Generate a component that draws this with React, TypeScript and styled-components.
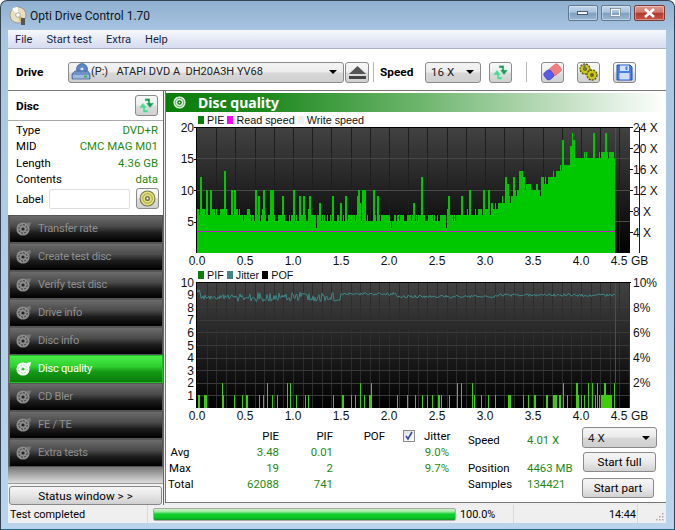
import React from "react";
import styled, { createGlobalStyle } from "styled-components";

const UI = `Roboto, "Noto Sans", sans-serif`;
const CHART = `"Liberation Sans", Arial, sans-serif`;

const Global = createGlobalStyle`
  html, body { margin: 0; padding: 0; background: #fff; }
  #root { width: 675px; height: 530px; overflow: hidden; }
  * { box-sizing: border-box; }
`;

const Win = styled.div`
  width: 675px; height: 530px; display: flex; flex-direction: column;
  padding: 0 8px 6px 7px;
  border: 1px solid #33434f; border-bottom-color: #1c6b84; border-radius: 7px 7px 0 0;
  background: linear-gradient(180deg, #8fb0d0 0%, #a9c6e2 6%, #b9d4ec 100%);
  font: 11.4px/14px ${UI}; color: #000;
`;
const TitleBar = styled.div`display: flex; align-items: center; height: 29px; flex: none;`;
const AppIconBox = styled.div`width: 21px; display: flex; margin-left: 1px;`;
const TitleText = styled.div`font-size: 12px; color: #0c1520; flex: 1;`;
const WinBtns = styled.div`display: flex; gap: 3px; margin-top: -6px; margin-right: 1px;`;
const WinBtn = styled.div<{ $close?: boolean }>`
  width: ${p => (p.$close ? 31 : 30)}px; height: 16px; border-radius: 2px; display: flex; align-items: center; justify-content: center;
  border: 1px solid ${p => (p.$close ? "#7d3a34" : "#5d7892")};
  background: ${p => p.$close
    ? "linear-gradient(180deg,#dc9a90 0%,#cf7a6c 45%,#b3372a 50%,#c4574a 100%)"
    : "linear-gradient(180deg,#c3d6ea 0%,#a9c2dc 45%,#7f9fc0 50%,#9ab6d2 100%)"};
  box-shadow: inset 0 0 0 1px rgba(255,255,255,.35);
`;
const Menu = styled.div`
  height: 19px; flex: none; display: flex; gap: 14px; padding: 3px 0 0 7px; font-size: 11.1px; color: #1a2340;
  background: linear-gradient(180deg,#f6f8fd,#d6dcef); border-bottom: 1px solid #a9b2c6;
`;
const Tool = styled.div`height: 42px; flex: none; display: flex; align-items: center; background: #fff; padding: 5px 0 0 8px; border-bottom: 1px solid #777;`;
const BoldLabel = styled.div<{ $w: number; $ml?: number }>`width: ${p => p.$w}px; margin-left: ${p => p.$ml ?? 0}px; font-weight: 700; font-size: 11.8px; flex: none;`;
const Combo = styled.div<{ $w: number }>`
  width: ${p => p.$w}px; height: 21px; flex: none; display: flex; align-items: center; padding: 0 4px 0 2px;
  border: 1px solid #8a8a8a; border-radius: 3px; background: linear-gradient(180deg,#f4f4f4 0%,#ececec 48%,#d8d8d8 52%,#cfcfcf 100%);
  color: #222; font-size: 11.6px; white-space: pre;
`;
const ComboText = styled.span`flex: 1; padding-left: 3px;`;
const DriveText = styled.span`flex: 1; font-size: 11px;`;
const Arrow = styled.span`width: 0; height: 0; border: 4px solid transparent; border-top: 4px solid #000; border-bottom: 0; margin-right: 2px;`;
const IconBtn = styled.div<{ $ml?: number; $size?: number }>`
  width: ${p => p.$size ?? 23}px; height: 21px; margin-left: ${p => p.$ml ?? 0}px; flex: none; display: flex; align-items: center; justify-content: center;
  border: 1px solid #8a8a8a; border-radius: 3px; background: linear-gradient(180deg,#f8f8f8 0%,#eee 48%,#dcdcdc 52%,#d0d0d0 100%);
`;
const Sep = styled.div<{ $ml: number }>`width: 1px; height: 20px; margin-left: ${p => p.$ml}px; background: #b5b5b5; flex: none;`;

const Body = styled.div`flex: 1; display: flex; min-height: 0; background: #ececec;`;
const Side = styled.div`width: 156px; flex: none; display: flex; flex-direction: column; border-right: 1px solid #666;`;
const DiscPanel = styled.div`height: 124px; flex: none; background: #fff;`;
const DiscHead = styled.div`height: 30px; display: flex; align-items: center; justify-content: space-between; padding: 0 5px 0 8px; font-weight: 700; font-size: 11.8px; border-bottom: 1px solid #aaa;`;
const DiscRows = styled.div`display: grid; grid-template-columns: 1fr auto; row-gap: 2.4px; padding: 2px 5px 0 8px; line-height: 14px;`;
const Val = styled.div`color: #1f8a12; text-align: right;`;
const InfoVal = styled(Val)`text-align: left;`;
const LabelRow = styled.div`display: flex; align-items: center; padding: 2px 4px 0 8px;`;
const LabelText = styled.span`width: 33px; flex: none;`;
const LabelInput = styled.div`width: 81px; height: 20px; border: 1px solid #ddd; border-radius: 2px; background: #fff;`;
const Nav = styled.div`flex: 1; background: linear-gradient(180deg,#666 0,#666 93%,#ddd 100%); display: flex; flex-direction: column; padding-left: 1px;`;
const NavItem = styled.div<{ $on?: boolean }>`
  height: 28px; flex: none; display: flex; align-items: center; gap: 6px; padding: 0 0 0 5px; font-size: 11.1px; letter-spacing: -.25px;
  border: 1px solid ${p => (p.$on ? "#22bb22" : "#555")};
  color: ${p => (p.$on ? "#fff" : "#8f8f8f")};
  background: ${p => p.$on
    ? "linear-gradient(180deg,#48ec48 0%,#2fd02f 40%,#159a15 60%,#0a7d0a 100%)"
    : "linear-gradient(180deg,#6c6c6c 0%,#4a4a4a 40%,#1c1c1c 65%,#000 100%)"};
`;
const NavFill = styled.div`flex: 1;`;
const StatusBtnRow = styled.div`height: 23px; flex: none; background: #f2f2f2; padding: 2px 1px 1px 1px; border-top: 1px solid #999;`;
const StatusBtn = styled.div`
  height: 19px; display: flex; align-items: center; justify-content: center; border: 1px solid #888; border-radius: 3px; letter-spacing: .05px;
  background: linear-gradient(180deg,#f6f6f6,#e6e6e6 50%,#cfcfcf); font-size: 11.6px;
`;

const Main = styled.div`flex: 1; margin-left: 1px; background: #fff; border: 1px solid #777; border-width: 0 0 1px 1px; display: flex; flex-direction: column; min-width: 0; margin-bottom: 3px;`;
const Head = styled.div`
  height: 19px; flex: none; margin-top: 2px; display: flex; align-items: center; padding-left: 6px; gap: 11px; color: #fff; font: 700 14px/19px "Noto Sans", sans-serif;
  background: linear-gradient(90deg,#0b7d0b 0%,#1f8a1f 20%,#6bb46b 50%,#c4e0c4 80%,#fff 100%);
`;
const ChartBox = styled.div<{ $mt: number }>`margin-top: ${p => p.$mt}px; flex: none;`;
const Legend = styled.div`height: 14px; display: flex; align-items: center; padding-left: 32px; font: 10.8px/14px ${CHART}; color: #111;`;
const Swatch = styled.span<{ $c: string }>`width: 6px; height: 8px; background: ${p => p.$c}; margin-right: 3px;`;
const LegendItem = styled.span`margin-right: 3px;`;
const Plot = styled.svg`display: block; overflow: visible;`;

const Stats = styled.div`flex: 1; display: flex; padding: 5px 0 0 2px; min-height: 0;`;
const Table = styled.div`
  width: 281px; display: grid; flex: none; grid-template-columns: 62px 49px 54px 52px 35px 29px; grid-auto-rows: 16px; align-items: center;
`;
const Cell = styled.div`text-align: right; white-space: nowrap;`;
const GreenCell = styled(Cell)`color: #1f8a12;`;
const Lab = styled.div`width: 24px; text-align: center;`;
const Check = styled.div`width: 12px; height: 12px; margin-left: 18px; border: 1px solid #8a8a8a; background: linear-gradient(135deg,#dfe2ea,#fff); display: flex; align-items: center; justify-content: center;`;
const JitterHead = styled.div`padding-left: 4px; white-space: nowrap;`;
const Info = styled.div`width: 114px; margin-left: 19px; flex: none; display: grid; grid-template-columns: 59px 1fr; grid-template-rows: 16px 12px 16px 16px; padding-top: 4px; align-items: center; align-content: start;`;
const Controls = styled.div`width: 75px; flex: none; display: flex; flex-direction: column; margin-top: -1px;`;
const Push = styled.div<{ $mt: number; $ml: number; $w: number }>`
  width: ${p => p.$w}px; height: 20px; margin: ${p => p.$mt}px 0 0 ${p => p.$ml}px; display: flex; align-items: center; justify-content: center; border: 1px solid #8a8a8a; border-radius: 3px;
  background: linear-gradient(180deg,#f6f6f6,#eaeaea 50%,#d2d2d2); font-size: 11.6px;
`;
const Stat = styled.div`height: 18px; flex: none; display: flex; align-items: center; background: #efefef; margin-top: -1px;`;
const StatCell = styled.div<{ $w: number; $r?: boolean }>`width: ${p => p.$w}px; flex: none; height: 100%; display: flex; align-items: center; padding: 1px 1px 0 2px; font-size: 10.9px; justify-content: ${p => (p.$r ? "flex-end" : "flex-start")}; border-right: 1px solid #d9d9d9;`;
const Progress = styled.div`width: 303px; height: 13px; margin: 0 2px 0 5px; flex: none; border: 1px solid #aaa; border-radius: 2px; background: linear-gradient(180deg,#c8f4c8 0%,#9fe89f 25%,#10d030 45%,#0ec82a 75%,#0a9a1e 100%);`;
const Grip = styled.div`flex: 1; height: 100%; display: flex; align-items: flex-end; justify-content: flex-end; padding: 0 2px 2px 0;`;

function rng(seed: number) {
  return () => {
    seed |= 0; seed = (seed + 0x6d2b79f5) | 0;
    let t = Math.imul(seed ^ (seed >>> 15), 1 | seed);
    t = (t + Math.imul(t ^ (t >>> 7), 61 | t)) ^ t;
    return ((t ^ (t >>> 14)) >>> 0) / 4294967296;
  };
}

const X0 = 31, PW = 433, PH = 126, END = 418;

function pieValues(): number[] {
  const r = rng(71);
  const knots: [number, number][] = [[0, 6.6], [45, 6], [60, 5.4], [240, 5.6], [260, 5.8], [288, 6.6], [312, 8.6], [336, 10.5], [360, 12.5], [384, 15], [418, 16]];
  const base = (x: number) => {
    for (let i = 1; i < knots.length; i++) if (x <= knots[i][0]) {
      const [a, b] = knots[i - 1], [c, d] = knots[i];
      return b + ((x - a) / (c - a)) * (d - b);
    }
    return 16;
  };
  const out: number[] = [];
  let x = 0;
  while (x < END) {
    const w = r() < 0.7 ? 1 : r() < 0.7 ? 2 : 3;
    const v = base(x) + (r() - 0.4) * 1.5;
    for (let i = 0; i < w && x < END; i++, x++) {
      const s = r();
      let u = v;
      if (s > 0.9) u += 1.5 + r() * 3;
      else if (s < 0.06) u -= 1;
      out.push(Math.min(19, Math.max(4, Math.round(u))));
    }
  }
  const over: Record<number, number> = { 3: 12, 9: 10, 27: 13, 34: 10, 58: 10, 75: 10, 85: 9, 96: 10, 143: 8, 180: 9, 149: 4, 186: 3, 175: 3, 224: 12, 176: 10, 396: 19, 408: 19, 375: 19 };
  Object.keys(over).forEach(k => { out[+k] = over[+k]; });
  // each spike keeps a width of two columns, so that it reads as green beside the dark grid
  const widened = out.slice();
  out.forEach((v, i) => { if (i + 1 < out.length && v > out[i + 1] + 1) widened[i + 1] = v; });
  return widened;
}

const PIF: [number, number, number][] = [
  [1, 2, 1], [7, 3, 1], [25, 2, 1], [25, 1, 2], [37, 1, 1], [45, 1, 1], [49, 2, 1], [62, 1, 1], [66, 1, 1], [70, 1, 2], [75, 1, 1], [80, 1, 1],
  [90, 1, 2], [93, 1, 2], [99, 1, 1], [108, 1, 1], [111, 1, 1], [136, 1, 1], [145, 2, 1], [154, 1, 1], [158, 1, 1], [163, 1, 2], [167, 1, 1], [172, 2, 1], [174, 1, 2], [200, 1, 1], [210, 1, 1], [218, 1, 1],
  [225, 1, 1], [230, 1, 1], [235, 1, 1], [241, 2, 1], [244, 1, 1], [252, 1, 1], [260, 1, 2], [264, 1, 2], [275, 1, 2], [277, 1, 1], [284, 1, 1], [291, 1, 1], [298, 1, 1],
  [311, 3, 1], [326, 1, 1], [331, 1, 1], [337, 2, 1], [349, 2, 1], [356, 4, 1], [362, 2, 1], [366, 1, 2], [370, 1, 1], [379, 2, 2], [381, 1, 1], [384, 1, 1], [387, 1, 1], [391, 1, 2], [395, 1, 2], [398, 1, 1], [400, 1, 2], [402, 1, 1],
  [404, 11, 1], [407, 2, 2], [417, 1, 2],
];

function jitterPath(): string {
  const r = rng(9);
  let d = "";
  for (let x = 0; x <= END; x += 1) {
    const amp = x < 4 ? 2 : x < 40 ? 2.6 : x < 144 ? 4.6 : x < 230 ? 1.4 : x < 380 ? 1.4 : 1.5;
    const mid = x < 4 ? 9 : x < 144 ? 15 : x < 200 ? 12 : x < 300 ? 14.5 : 13;
    const y = mid + (r() - 0.5) * 2 * amp;
    d += `${d ? "L" : "M"}${X0 + x} ${y.toFixed(1)}`;
  }
  return d;
}

const XLabels = () => (
  <>
    {Array.from({ length: 10 }, (_, i) => (
      <text key={i} x={X0 + i * 48 - (i === 9 ? 10 : 0)} y={PH + 11.5} textAnchor="middle">{(i * 0.5).toFixed(1)}</text>
    ))}
    <text x={X0 + PW + 1} y={PH + 11.5}>GB</text>
  </>
);

const Frame = ({ step, hl, id, line }: { step: number; hl: number[]; id: string; line: string }) => (
  <>
    <defs>
      <linearGradient id={id} x1="0" x2="0" y1="0" y2="1">
        <stop offset="0" stopColor="#424242" />
        <stop offset="1" stopColor="#000" />
      </linearGradient>
    </defs>
    <rect x={X0} y={0} width={PW} height={PH} fill={`url(#${id})`} />
    {Array.from({ length: Math.round(432 / step) }, (_, i) => (
      <rect key={i} x={Math.round(X0 + (i + 1) * step)} y={0} width={1} height={PH} fill={step > 10 ? "#1e1e1e" : "#2c2c2c"} />
    ))}
    {hl.map(y => <rect key={y} x={X0} y={y} width={PW} height={1} fill={line} />)}
  </>
);

const pie = pieValues();

const ChartOne = () => (
  <Plot width={500} height={141} fontFamily={CHART} fontSize={12} fill="#111" aria-label="PIE chart">
    <Frame step={19.2} hl={[31, 63, 94]} id="g1" line="#484848" />
    {pie.map((v, i) => {
      const h = Math.round(v * 6.3);
      return <rect key={i} x={X0 + i} y={PH - h} width={1} height={h} fill="#00c800" />;
    })}
    <rect x={X0} y={104} width={END} height={1} fill="#c020c0" />
    <rect x={X0 + END} y={0} width={1} height={38} fill="#e01010" />
    <rect x={X0} y={0} width={PW + 1} height={1} fill="#000" />
    <rect x={X0 - 1} y={0} width={1} height={PH} fill="#000" />
    {[20, 15, 10, 5].map(v => (
      <g key={v}>
        <text x={X0 - 3} y={PH - v * 6.3 + 4.5} textAnchor="end">{v}</text>
        <rect x={X0 - 3} y={Math.round(PH - v * 6.3)} width={2} height={1} />
      </g>
    ))}
    {[24, 20, 16, 12, 8, 4].map(v => (
      <g key={v}>
        <rect x={X0 + PW} y={PH - v * 5.25} width={3} height={1} />
        <text x={X0 + PW + 3} y={PH - v * 5.25 + 4.5}>{v} X</text>
      </g>
    ))}
    <XLabels />
  </Plot>
);

const ChartTwo = () => (
  <Plot width={500} height={141} fontFamily={CHART} fontSize={12} fill="#111" aria-label="PIF chart">
    <Frame step={9.6} hl={[13, 25, 38, 50, 63, 76, 88, 101, 113]} id="g2" line="#3a3a3a" />
    {PIF.map(([x, w, h], i) => {
      const bar = Math.round(h * 12.6);
      return <rect key={i} x={X0 + x} y={PH - bar} width={w} height={bar} fill="#3fcc0a" />;
    })}
    <path d={jitterPath()} fill="none" stroke="#3f8585" strokeWidth={1} />
    <rect x={X0 + END} y={0} width={1} height={PH - 25} fill="#e01010" />
    <rect x={X0} y={0} width={PW + 1} height={1} fill="#000" />
    <rect x={X0 - 1} y={0} width={1} height={PH} fill="#000" />
    {[10, 9, 8, 7, 6, 5, 4, 3, 2, 1].map(v => (
      <text key={v} x={X0 - 3} y={PH - v * 12.6 + 4.5} textAnchor="end">{v}</text>
    ))}
    {[10, 8, 6, 4, 2].map(v => (
      <text key={v} x={X0 + PW + 3} y={PH - v * 12.6 + 4.5}>{v}%</text>
    ))}
    <XLabels />
  </Plot>
);

const Disc = ({ size = 16, fill = "#d9d9d9", ring = "#999", hole = "#fff" }: { size?: number; fill?: string; ring?: string; hole?: string }) => (
  <svg width={size} height={size} viewBox="0 0 16 16">
    <circle cx="8" cy="8" r="7" fill={fill} stroke={ring} strokeWidth="1" />
    <circle cx="8" cy="8" r="4.5" fill="none" stroke={ring} strokeWidth=".6" />
    <circle cx="8" cy="8" r="2.4" fill={ring} />
    <circle cx="8" cy="8" r="1" fill={hole} />
  </svg>
);

const NavIcon = ({ on }: { on?: boolean }) => (
  <svg width={17} height={16} viewBox="0 0 17 16" style={{ flex: "none" }}>
    <circle cx="8" cy="8" r="6.6" fill={on ? "#fff" : "#8c8c8c"} />
    <circle cx="8" cy="8" r="4.2" fill="none" stroke={on ? "#9be89b" : "#333"} strokeWidth="1" strokeDasharray="2 1.2" />
    <circle cx="8" cy="8" r="1.6" fill={on ? "#2fc82f" : "#222"} />
    <path d="M11 2 L16 1 L15 6 Z" fill={on ? "#fff" : "#777"} />
  </svg>
);

const Sync = () => (
  <svg width={19} height={17} viewBox="0 0 19 17">
    <path d="M8 1.5 H13 V6 H17 L13 11 L9 6 H11 V4 H8 Z" fill="#169a55" stroke="#bfe8cf" strokeWidth=".5" />
    <path d="M11 15.5 H6 V11 H2 L6 6 L10 11 H8 V13 H11 Z" fill="#45dc92" stroke="#bfe8cf" strokeWidth=".5" />
  </svg>
);

const Eject = () => (
  <svg width={19} height={15} viewBox="0 0 19 15">
    <path d="M9.5 1 L18 9 L1 9 Z" fill="#555" />
    <rect x="1" y="11" width="17" height="3" fill="#444" />
  </svg>
);

const Eraser = () => (
  <svg width={19} height={18} viewBox="0 0 19 18">
    <g transform="rotate(-38 9.5 9)">
      <rect x="7.5" y="4.5" width="11" height="9" rx="2.5" fill="#f08080" stroke="#d85a6a" strokeWidth=".6" />
      <rect x="0.5" y="4.5" width="8.5" height="9" rx="3" fill="#5a5ae8" stroke="#3a3ac0" strokeWidth=".6" />
    </g>
  </svg>
);

const Gear = ({ cx, cy, r }: { cx: number; cy: number; r: number }) => (
  <g>
    <circle cx={cx} cy={cy} r={r} fill="#d0c818" stroke="#5a5a10" strokeWidth="1.4" strokeDasharray="2 1" />
    <circle cx={cx} cy={cy} r={r * 0.4} fill="#6a6a18" />
  </g>
);
const Gears = () => (
  <svg width={21} height={18} viewBox="0 0 21 18">
    <Gear cx={7} cy={6} r={5} />
    <Gear cx={14} cy={12} r={5} />
    <rect x="5.5" y="1" width="2" height="6" fill="#777" />
  </svg>
);

const Floppy = () => (
  <svg width={17} height={17} viewBox="0 0 17 17">
    <path d="M1 1 H14 L16 3 V16 H1 Z" fill="#4a7de0" stroke="#1f4fc0" strokeWidth="1" />
    <rect x="4" y="1.5" width="9" height="5.5" fill="#d4e2f7" />
    <rect x="9.5" y="2.5" width="2" height="3.5" fill="#4a7de0" />
    <rect x="3.5" y="9" width="10" height="6.5" fill="#cfdcf5" />
  </svg>
);

const DriveIcon = () => (
  <svg width={20} height={19} viewBox="0 0 20 19" style={{ flex: "none" }}>
    <circle cx="11" cy="6" r="5.4" fill="#5d86c8" stroke="#2e4f88" strokeWidth=".7" />
    <circle cx="11" cy="6" r="1.6" fill="#dbe7f7" />
    <path d="M1 11 L4 8 H17 L19 11 V16 H1 Z" fill="#6f92c8" stroke="#3a5a90" strokeWidth=".7" />
    <rect x="2" y="12" width="16" height="3.4" fill="#9fb9de" />
    <rect x="13" y="12.8" width="3" height="1.6" fill="#28b04a" />
  </svg>
);

const AppIcon = () => (
  <svg width={18} height={19} viewBox="0 0 18 19">
    <circle cx="9" cy="9" r="8" fill="#e9dfc0" stroke="#8c8468" strokeWidth=".7" />
    <path d="M9 9 L3 3 A8 8 0 0 1 9 1 Z" fill="#fff" />
    <path d="M9 9 L16 13 A8 8 0 0 1 11 17 Z" fill="#c8b985" />
    <circle cx="9" cy="9" r="2.3" fill="#fff" stroke="#8c8468" strokeWidth=".6" />
    <rect x="12" y="12" width="4" height="7" fill="#555" />
  </svg>
);

const GripDots = () => (
  <svg width={9} height={9}>
    {[[7, 1], [4, 4], [7, 4], [1, 7], [4, 7], [7, 7]].map(([x, y]) => <rect key={`${x}${y}`} x={x} y={y} width={1.5} height={1.5} fill="#aaa" />)}
  </svg>
);

const navItems = ["Transfer rate", "Create test disc", "Verify test disc", "Drive info", "Disc info", "Disc quality", "CD Bler", "FE / TE", "Extra tests"];

export default function App() {
  return (
    <Win>
      <Global />
      <TitleBar>
        <AppIconBox><AppIcon /></AppIconBox>
        <TitleText>Opti Drive Control 1.70</TitleText>
        <WinBtns>
          <WinBtn><svg width="12" height="6"><rect x=".5" y="1.5" width="10" height="3" fill="#f4f4f4" stroke="#4a5a6a" /></svg></WinBtn>
          <WinBtn><svg width="12" height="9"><rect x="1" y="1" width="9" height="7" fill="none" stroke="#f4f4f4" strokeWidth="2" /><rect x=".5" y=".5" width="10" height="8" fill="none" stroke="#4a5a6a" strokeWidth=".6" /></svg></WinBtn>
          <WinBtn $close><svg width="13" height="10"><path d="M2 1 L11 9 M11 1 L2 9" stroke="#fff" strokeWidth="2.6" /></svg></WinBtn>
        </WinBtns>
      </TitleBar>
      <Menu><span>File</span><span>Start test</span><span>Extra</span><span>Help</span></Menu>
      <Tool>
        <BoldLabel $w={52}>Drive</BoldLabel>
        <Combo $w={276}><DriveIcon /><DriveText>{"(P:)   ATAPI DVD A  DH20A3H YV68"}</DriveText><Arrow /></Combo>
        <IconBtn $ml={1} $size={24}><Eject /></IconBtn>
        <Sep $ml={4} />
        <BoldLabel $w={45} $ml={6}>Speed</BoldLabel>
        <Combo $w={56}><ComboText>16 X</ComboText><Arrow /></Combo>
        <IconBtn $ml={8}><Sync /></IconBtn>
        <Sep $ml={14} />
        <IconBtn $ml={14}><Eraser /></IconBtn>
        <IconBtn $ml={13}><Gears /></IconBtn>
        <IconBtn $ml={13}><Floppy /></IconBtn>
      </Tool>
      <Body>
        <Side>
          <DiscPanel>
            <DiscHead>Disc<IconBtn><Sync /></IconBtn></DiscHead>
            <DiscRows>
              <div>Type</div><Val>DVD+R</Val>
              <div>MID</div><Val>CMC MAG M01</Val>
              <div>Length</div><Val>4.36 GB</Val>
              <div>Contents</div><Val>data</Val>
            </DiscRows>
            <LabelRow><LabelText>Label</LabelText><LabelInput /><IconBtn $ml={6}><Disc size={17} fill="#e4e07a" ring="#77774a" /></IconBtn></LabelRow>
          </DiscPanel>
          <Nav>
            {navItems.map(n => (
              <NavItem key={n} $on={n === "Disc quality"}><NavIcon on={n === "Disc quality"} />{n}</NavItem>
            ))}
            <NavFill />
          </Nav>
          <StatusBtnRow><StatusBtn>Status window &gt; &gt;</StatusBtn></StatusBtnRow>
        </Side>
        <Main>
          <Head><Disc size={15} fill="#d8efd8" ring="#0b7d0b" />Disc quality</Head>
          <ChartBox $mt={1}>
            <Legend>
              <Swatch $c="#0a7d0a" /><LegendItem>PIE</LegendItem>
              <Swatch $c="#ff00ff" /><LegendItem>Read speed</LegendItem>
              <Swatch $c="#eeeeee" /><LegendItem>Write speed</LegendItem>
            </Legend>
            <ChartOne />
          </ChartBox>
          <ChartBox $mt={0}>
            <Legend>
              <Swatch $c="#0a7d0a" /><LegendItem>PIF</LegendItem>
              <Swatch $c="#3f8585" /><LegendItem>Jitter</LegendItem>
              <Swatch $c="#000" /><LegendItem>POF</LegendItem>
            </Legend>
            <ChartTwo />
          </ChartBox>
          <Stats>
            <Table>
              <span /><Cell>PIE</Cell><Cell>PIF</Cell><Cell>POF</Cell>
              <Check><svg width="10" height="10"><path d="M2 5 L4 8 L8 1" fill="none" stroke="#3a4aa8" strokeWidth="1.6" /></svg></Check>
              <JitterHead>Jitter</JitterHead>
              <Lab>Avg</Lab><GreenCell>3.48</GreenCell><GreenCell>0.01</GreenCell><span /><span /><GreenCell>9.0%</GreenCell>
              <Lab>Max</Lab><GreenCell>19</GreenCell><GreenCell>2</GreenCell><span /><span /><GreenCell>9.7%</GreenCell>
              <Lab>Total</Lab><GreenCell>62088</GreenCell><GreenCell>741</GreenCell>
            </Table>
            <Info>
              <div>Speed</div><InfoVal>4.01 X</InfoVal>
              <span /><span />
              <div>Position</div><InfoVal>4463 MB</InfoVal>
              <div>Samples</div><InfoVal>134421</InfoVal>
            </Info>
            <Controls>
              <Combo $w={75}><ComboText>4 X</ComboText><Arrow /></Combo>
              <Push $mt={4} $ml={1} $w={73}>Start full</Push>
              <Push $mt={6} $ml={0} $w={72}>Start part</Push>
            </Controls>
          </Stats>
        </Main>
      </Body>
      <Stat>
        <StatCell $w={140}>Test completed</StatCell>
        <Progress />
        <StatCell $w={56}>100.0%</StatCell>
        <StatCell $w={124} $r>14:44</StatCell>
        <Grip><GripDots /></Grip>
      </Stat>
    </Win>
  );
}
